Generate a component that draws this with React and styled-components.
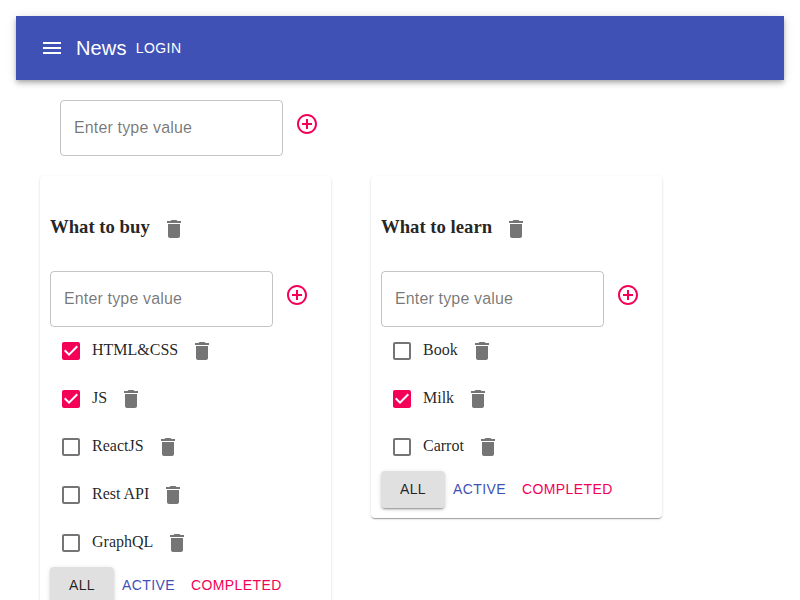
import React, { useState } from "react";
import styled, { createGlobalStyle } from "styled-components";

const GlobalStyle = createGlobalStyle`
  *, *::before, *::after { box-sizing: border-box; }
  html, body { margin: 0; background: #fff; }
  html { overflow: hidden; }
  body {
    font-family: "Liberation Serif", "Times New Roman", serif;
    font-size: 16px;
    color: rgba(0, 0, 0, 0.87);
  }
`;

const sans = `"Liberation Sans", Arial, sans-serif`;

const Page = styled.div`
  padding: 16px;
`;

const AppBar = styled.header`
  display: flex;
  align-items: center;
  height: 64px;
  padding: 0 24px;
  color: #fff;
  background: #3f51b5;
  box-shadow: 0 2px 4px -1px rgba(0, 0, 0, 0.2), 0 4px 5px 0 rgba(0, 0, 0, 0.14),
    0 1px 10px 0 rgba(0, 0, 0, 0.12);
`;

const IconButton = styled.button`
  display: inline-flex;
  vertical-align: middle;
  flex: none;
  margin: 0 0 0 ${(p) => (p.$edge ? "-12px" : "0")};
  padding: ${(p) => (p.$compact ? "9px" : "12px")};
  border: 0;
  background: none;
  color: ${(p) => p.$color || "rgba(0, 0, 0, 0.54)"};
  cursor: pointer;
`;

const Glyph = styled.svg`
  display: block;
  width: 24px;
  height: 24px;
  fill: currentColor;
`;

const Title = styled.h6`
  margin: 0;
  font: 500 20px/1.6 ${sans};
  letter-spacing: 0.0075em;
`;

const Button = styled.button`
  display: inline-flex;
  align-items: center;
  justify-content: center;
  min-width: 64px;
  padding: 6px ${(p) => (p.$active ? "16px" : "8px")};
  border: 0;
  border-radius: 4px;
  font: 500 14px/1.75 ${sans};
  letter-spacing: 0.02857em;
  text-transform: uppercase;
  cursor: pointer;
  color: ${(p) => p.$color || "inherit"};
  background: ${(p) => (p.$active ? "#e0e0e0" : "transparent")};
  box-shadow: ${(p) =>
    p.$active
      ? "0 3px 1px -2px rgba(0,0,0,.2), 0 2px 2px 0 rgba(0,0,0,.14), 0 1px 5px 0 rgba(0,0,0,.12)"
      : "none"};
`;

const AddForm = styled.form`
  display: flex;
  align-items: flex-start;
`;

const NewList = styled.div`
  padding: 20px 44px;
`;

const Field = styled.input`
  width: 223px;
  height: 56px;
  padding: 0 13px;
  border: 1px solid rgba(0, 0, 0, 0.23);
  border-radius: 4px;
  outline: 0;
  background: none;
  font: 16px ${sans};
  letter-spacing: 0.00938em;
  color: inherit;

  &::placeholder {
    color: rgba(0, 0, 0, 0.54);
    opacity: 1;
  }
`;

const Board = styled.main`
  display: flex;
  align-items: flex-start;
  gap: 40px;
  padding: 0 24px;
`;

const Card = styled.section`
  width: 291px;
  padding: 10px;
  border-radius: 4px;
  background: #fff;
  box-shadow: 0 2px 1px -1px rgba(0, 0, 0, 0.2), 0 1px 1px 0 rgba(0, 0, 0, 0.14),
    0 1px 3px 0 rgba(0, 0, 0, 0.12);
`;

const CardTitle = styled.h3`
  margin: 18.72px 0;
  font-size: 18.72px;
`;

const Task = styled.div`
  height: 48px;
`;

const Filters = styled.div`
  display: flex;
`;

const icons = {
  menu: "M3 18h18v-2H3v2zm0-5h18v-2H3v2zm0-7v2h18V6H3z",
  add: "M13 7h-2v4H7v2h4v4h2v-4h4v-2h-4V7zm-1-5C6.48 2 2 6.48 2 12s4.48 10 10 10 10-4.48 10-10S17.52 2 12 2zm0 18c-4.41 0-8-3.59-8-8s3.59-8 8-8 8 3.59 8 8-3.59 8-8 8z",
  trash: "M6 19c0 1.1.9 2 2 2h8c1.1 0 2-.9 2-2V7H6v12zM19 4h-3.5l-1-1h-5l-1 1H5v2h14V4z",
  checked:
    "M19 3H5c-1.11 0-2 .9-2 2v14c0 1.1.89 2 2 2h14c1.11 0 2-.9 2-2V5c0-1.1-.89-2-2-2zm-9 14l-5-5 1.41-1.41L10 14.17l7.59-7.59L19 8l-9 9z",
  blank:
    "M19 5v14H5V5h14m0-2H5c-1.1 0-2 .9-2 2v14c0 1.1.9 2 2 2h14c1.1 0 2-.9 2-2V5c0-1.1-.9-2-2-2z",
};

const pink = "#f50057";

const Icon = ({ name }) => (
  <Glyph viewBox="0 0 24 24" aria-hidden="true">
    <path d={icons[name]} />
  </Glyph>
);

function AddItem({ onAdd }) {
  const [value, setValue] = useState("");
  const submit = (e) => {
    e.preventDefault();
    if (value.trim()) onAdd(value.trim());
    setValue("");
  };
  return (
    <AddForm onSubmit={submit}>
      <Field
        placeholder="Enter type value"
        value={value}
        onChange={(e) => setValue(e.target.value)}
      />
      <IconButton $color={pink} aria-label="Add">
        <Icon name="add" />
      </IconButton>
    </AddForm>
  );
}

const filters = [
  { name: "All" },
  { name: "Active", color: "#3f51b5" },
  { name: "Completed", color: pink },
];

function TodoList({ title, initial, onRemove }) {
  const [tasks, setTasks] = useState(initial);
  const [filter, setFilter] = useState("All");
  const shown = tasks.filter(
    (t) => filter === "All" || t.done === (filter === "Completed")
  );
  return (
    <Card>
      <CardTitle>
        {title}
        <IconButton aria-label="Delete list" onClick={onRemove}>
          <Icon name="trash" />
        </IconButton>
      </CardTitle>
      <AddItem onAdd={(name) => setTasks([{ name, done: false }, ...tasks])} />
      {shown.map((task) => (
        <Task key={task.name}>
          <IconButton
            $compact
            $color={task.done ? pink : undefined}
            role="checkbox"
            aria-checked={task.done}
            aria-label={task.name}
            onClick={() =>
              setTasks(tasks.map((t) => (t === task ? { ...t, done: !t.done } : t)))
            }
          >
            <Icon name={task.done ? "checked" : "blank"} />
          </IconButton>
          <span>{task.name}</span>
          <IconButton
            aria-label="Delete task"
            onClick={() => setTasks(tasks.filter((t) => t !== task))}
          >
            <Icon name="trash" />
          </IconButton>
        </Task>
      ))}
      <Filters>
        {filters.map(({ name, color }) => (
          <Button
            key={name}
            $color={color}
            $active={filter === name}
            onClick={() => setFilter(name)}
          >
            {name}
          </Button>
        ))}
      </Filters>
    </Card>
  );
}

const initialLists = [
  {
    title: "What to buy",
    tasks: [
      { name: "HTML&CSS", done: true },
      { name: "JS", done: true },
      { name: "ReactJS", done: false },
      { name: "Rest API", done: false },
      { name: "GraphQL", done: false },
    ],
  },
  {
    title: "What to learn",
    tasks: [
      { name: "Book", done: false },
      { name: "Milk", done: true },
      { name: "Carrot", done: false },
    ],
  },
];

export default function App() {
  const [lists, setLists] = useState(initialLists);
  return (
    <Page>
      <GlobalStyle />
      <AppBar>
        <IconButton $edge $color="inherit" aria-label="Menu">
          <Icon name="menu" />
        </IconButton>
        <Title>News</Title>
        <Button>Login</Button>
      </AppBar>
      <NewList>
        <AddItem onAdd={(title) => setLists([...lists, { title, tasks: [] }])} />
      </NewList>
      <Board>
        {lists.map((list) => (
          <TodoList
            key={list.title}
            title={list.title}
            initial={list.tasks}
            onRemove={() => setLists(lists.filter((l) => l !== list))}
          />
        ))}
      </Board>
    </Page>
  );
}
